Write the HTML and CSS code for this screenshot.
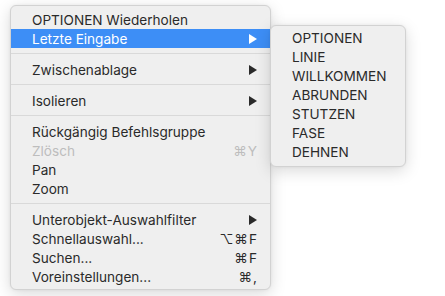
FILE: index.html
```html
<!DOCTYPE html>
<html lang="de">
<head>
<meta charset="utf-8">
<link rel="stylesheet" href="styles.css">
</head>
<body>
<div class="stage">
  <div class="menu main">
    <div class="item"><span class="label">OPTIONEN Wiederholen</span></div>
    <div class="item active"><span class="label">Letzte Eingabe</span><span class="arrow"></span></div>
    <div class="sep"></div>
    <div class="item"><span class="label">Zwischenablage</span><span class="arrow"></span></div>
    <div class="sep"></div>
    <div class="item"><span class="label">Isolieren</span><span class="arrow"></span></div>
    <div class="sep"></div>
    <div class="item"><span class="label">Rückgängig Befehlsgruppe</span></div>
    <div class="item disabled"><span class="label">Zlösch</span><span class="key">⌘Y</span></div>
    <div class="item"><span class="label">Pan</span></div>
    <div class="item"><span class="label">Zoom</span></div>
    <div class="sep"></div>
    <div class="item"><span class="label">Unterobjekt-Auswahlfilter</span><span class="arrow"></span></div>
    <div class="item"><span class="label">Schnellauswahl...</span><span class="key">⌥⌘F</span></div>
    <div class="item"><span class="label">Suchen...</span><span class="key">⌘F</span></div>
    <div class="item"><span class="label">Voreinstellungen...</span><span class="key">⌘,</span></div>
  </div>
  <div class="menu sub">
    <div class="item"><span class="label">OPTIONEN</span></div>
    <div class="item"><span class="label">LINIE</span></div>
    <div class="item"><span class="label">WILLKOMMEN</span></div>
    <div class="item"><span class="label">ABRUNDEN</span></div>
    <div class="item"><span class="label">STUTZEN</span></div>
    <div class="item"><span class="label">FASE</span></div>
    <div class="item"><span class="label">DEHNEN</span></div>
  </div>
</div>
</body>
</html>
```
FILE: styles.css
```css
html, body {
  margin: 0;
  background: #ffffff;
}
body {
  font-family: Inter, "Noto Sans", sans-serif;
  font-size: 13.6px;
  color: #2a2a2a;
}
.stage {
  position: relative;
  width: 445px;
  height: 296px;
  padding: 5px 0 0 10px;
  box-sizing: border-box;
}
.menu {
  background: #efefef;
  border: 1px solid #d2d2d2;
  border-radius: 6px;
  box-shadow: 0 4px 16px rgba(0, 0, 0, 0.15), 0 0 3px rgba(0, 0, 0, 0.06);
  box-sizing: border-box;
}
.main {
  width: 261px;
  height: 285px;
  padding: 4px 0 3px;
}
.sub {
  position: absolute;
  left: 270px;
  top: 25px;
  width: 136px;
  height: 142px;
  padding: 2px 0 4px;
}
.item {
  height: 19px;
  display: flex;
  align-items: center;
  padding: 0 12px 0 21px;
  white-space: nowrap;
}
.sub .item {
  padding-left: 21px;
}
.label {
  flex: 1;
}
.active {
  background: #3d8ef6;
  color: #ffffff;
}
.disabled {
  color: #bdbdbd;
}
.arrow {
  width: 0;
  height: 0;
  border-top: 5px solid transparent;
  border-bottom: 5px solid transparent;
  border-left: 8px solid #2a2a2a;
  margin-right: 1px;
}
.active .arrow {
  border-left-color: #ffffff;
}
.key {
  letter-spacing: 1px;
}
.sep {
  height: 1px;
  background: #d9d9d9;
  margin: 5px 0 6px;
}
```
